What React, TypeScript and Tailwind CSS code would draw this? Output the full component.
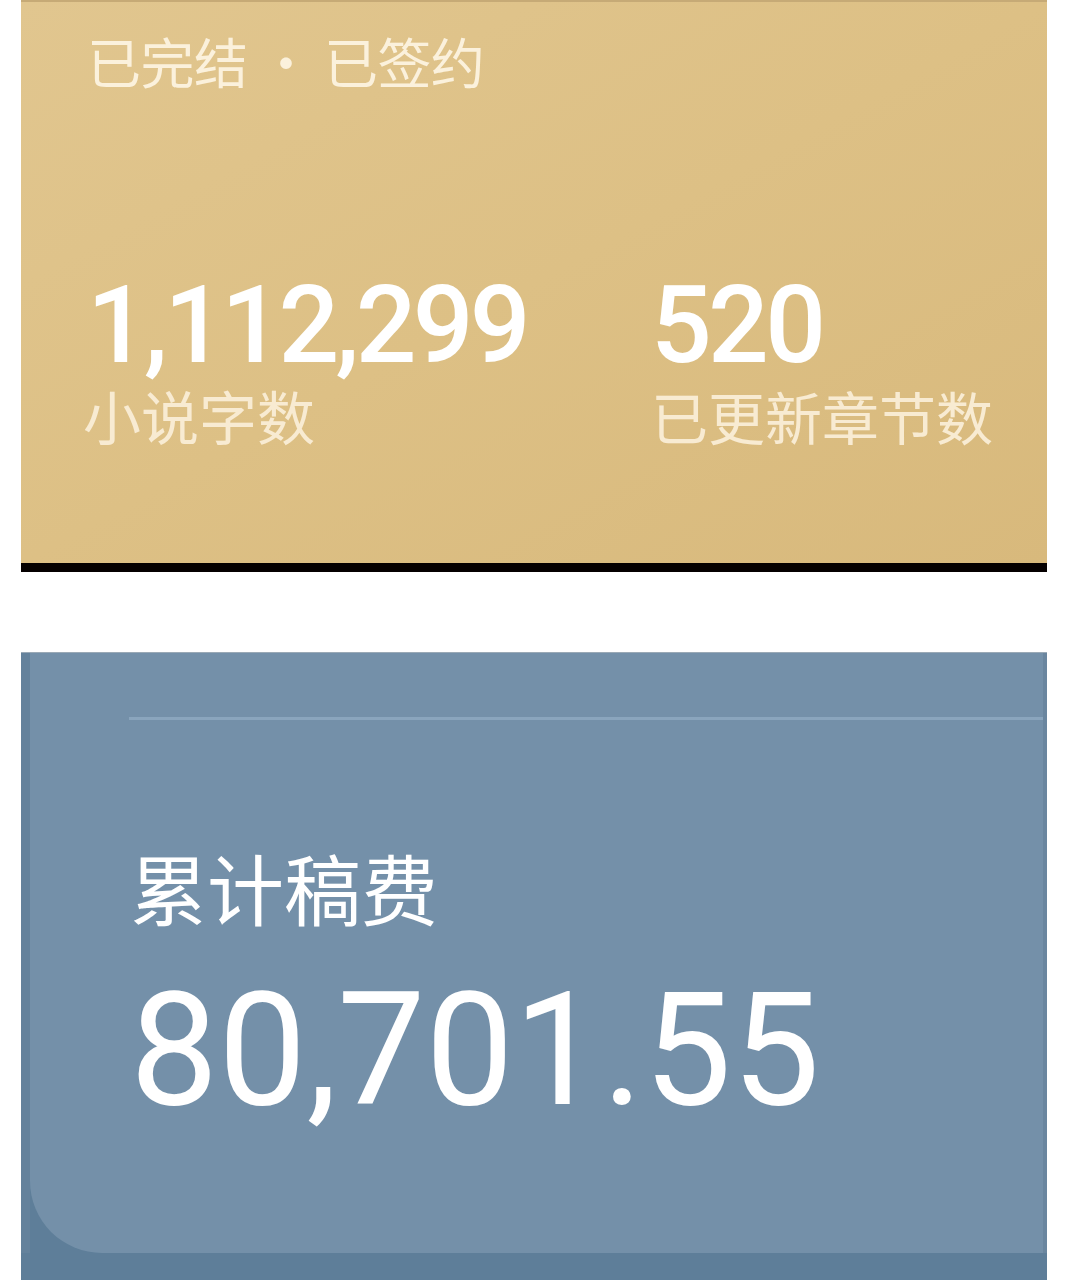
import React from "react";

const cjk = { fontFamily: '"Noto Sans CJK SC", "Noto Sans", sans-serif' };
const num = { fontFamily: 'Roboto, "Liberation Sans", sans-serif' };

export default function App() {
  return (
    <div className="w-[1069px] h-[1280px] bg-white overflow-hidden">
      {/* Gold card */}
      <div className="ml-[21px] w-[1026px] h-[572px] flex flex-col">
        <div className="h-[2px] bg-[#c6aa76]" />
        <div className="flex-1 bg-gradient-to-br from-[#e1c68f] via-[#ddc085] to-[#d8b97c] pl-[66px] pt-[23px] flex flex-col">
          <div className="text-[54px] leading-[72px] text-[#fbf1dc] tracking-[-0.01em]" style={cjk}>
            已完结 · 已签约
          </div>
          <div className="mt-[189px] flex">
            <div className="w-[564px] flex flex-col">
              <div className="text-[107px] leading-[80px] font-medium text-white tracking-[-0.035em]" style={num}>
                1,112,299
              </div>
              <div className="-ml-[4px] mt-[19px] text-[58px] leading-[60px] text-[#f8ebd2]" style={cjk}>
                小说字数
              </div>
            </div>
            <div className="flex flex-col">
              <div className="text-[107px] leading-[80px] font-medium text-white tracking-[-0.035em]" style={num}>
                520
              </div>
              <div className="mt-[19px] text-[57px] leading-[60px] text-[#f8ebd2]" style={cjk}>
                已更新章节数
              </div>
            </div>
          </div>
        </div>
        <div className="h-[9px] bg-[#050000]" />
      </div>

      {/* Blue card */}
      <div className="mt-[80px] ml-[21px] w-[1026px] h-[628px] bg-[#5e7e99] border-t border-[#9aa9b6] flex">
        <div className="w-[9px] h-[600px] bg-[#64829c]" />
        <div className="flex-1 h-[600px] bg-[#7490a9] rounded-bl-[72px] border-r-[4px] border-[#6a869f] flex flex-col">
          <div className="mt-[64px] ml-[99px] h-[3px] bg-[#8aa5bd]" />
          <div className="ml-[100px] mt-[124px] text-[77px] leading-[86px] text-white" style={cjk}>
            累计稿费
          </div>
          <div className="ml-[100px] mt-[45px] text-[157px] leading-[150px] text-white tracking-[0em]" style={num}>
            80,701.55
          </div>
        </div>
      </div>
    </div>
  );
}
